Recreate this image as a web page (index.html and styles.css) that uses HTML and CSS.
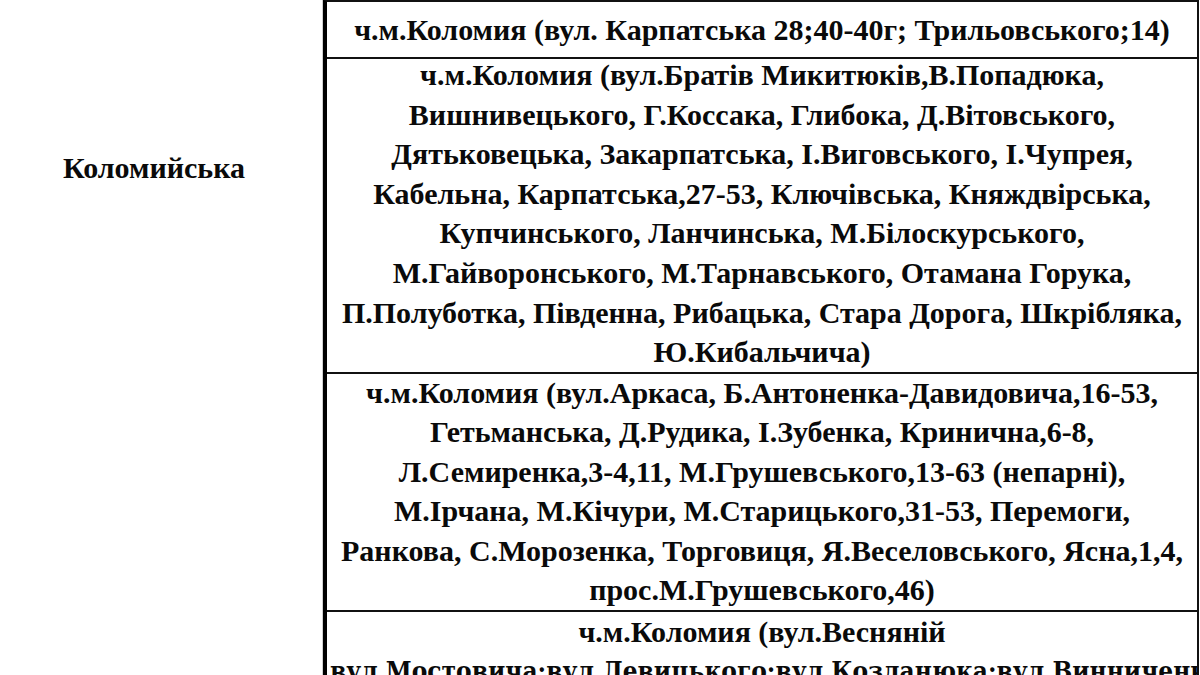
FILE: index.html
```html
<!DOCTYPE html>
<html lang="uk">
<head>
<meta charset="utf-8">
<link rel="stylesheet" href="styles.css">
</head>
<body>
<div class="table">
  <div class="name-col">
    <div class="name">Коломийська</div>
  </div>
  <div class="addr-col">
    <div class="row row1">
      <span class="ln">ч.м.Коломия (вул. Карпатська 28;40-40г; Трильовського;14)</span>
    </div>
    <div class="row row2">
      <div class="lines">
        <span class="ln">ч.м.Коломия (вул.Братів Микитюків,В.Попадюка,</span>
        <span class="ln">Вишнивецького, Г.Коссака, Глибока, Д.Вітовського,</span>
        <span class="ln">Дятьковецька, Закарпатська, І.Виговського, І.Чупрея,</span>
        <span class="ln">Кабельна, Карпатська,27-53, Ключівська, Княждвірська,</span>
        <span class="ln">Купчинського, Ланчинська, М.Білоскурського,</span>
        <span class="ln">М.Гайворонського, М.Тарнавського, Отамана Горука,</span>
        <span class="ln">П.Полуботка, Південна, Рибацька, Стара Дорога, Шкрібляка,</span>
        <span class="ln">Ю.Кибальчича)</span>
      </div>
    </div>
    <div class="row row3">
      <div class="lines">
        <span class="ln">ч.м.Коломия (вул.Аркаса, Б.Антоненка-Давидовича,16-53,</span>
        <span class="ln">Гетьманська, Д.Рудика, І.Зубенка, Кринична,6-8,</span>
        <span class="ln">Л.Семиренка,3-4,11, М.Грушевського,13-63 (непарні),</span>
        <span class="ln">М.Ірчана, М.Кічури, М.Старицького,31-53, Перемоги,</span>
        <span class="ln">Ранкова, С.Морозенка, Торговиця, Я.Веселовського, Ясна,1,4,</span>
        <span class="ln">прос.М.Грушевського,46)</span>
      </div>
    </div>
    <div class="row row4">
      <span class="ln">ч.м.Коломия (вул.Весняній</span>
      <span class="ln alt">вул.Мостовича;вул.Левицького;вул.Козланюка;вул.Винниченко</span>
    </div>
  </div>
</div>
</body>
</html>
```

FILE: styles.css
```css
html, body {
  margin: 0;
  padding: 0;
  background: #fff;
}
body {
  width: 1200px;
  height: 675px;
  overflow: hidden;
  font-family: "Liberation Serif", "Times New Roman", serif;
  font-weight: bold;
  color: #0a0a0a;
}
.table {
  display: flex;
  width: 1200px;
}
.name-col {
  width: 323px;
  border-right: 1px solid #d0d0d0;
  box-sizing: border-box;
  flex: none;
}
.name {
  font-size: 30px;
  line-height: 34px;
  padding-top: 151px;
  padding-right: 14px;
  text-align: center;
}
.addr-col {
  flex: 1;
  border-left: 4px solid #000;
  border-right: 2px solid #111;
  border-top: 2px solid #111;
  margin-right: 1px;
  min-width: 0;
}
.row {
  display: flex;
  flex-direction: column;
  align-items: center;
  border-bottom: 2px solid #111;
  font-size: 30px;
  line-height: 39.4px;
  box-sizing: border-box;
}
.lines {
  display: flex;
  flex-direction: column;
  align-items: center;
}
.ln {
  display: block;
  white-space: nowrap;
}
.row1 {
  height: 57px;
  justify-content: center;
}
.row2 {
  height: 315px;
}
.row2 .lines {
  line-height: 39.6px;
  margin-top: -4px;
}
.row3 {
  height: 238px;
}
.row3 .lines {
  margin-top: -1px;
}
.row4 {
  border-bottom: none;
  overflow: hidden;
  height: 80px;
  align-items: stretch;
  text-align: center;
}
.row4 .ln {
  line-height: 40px;
}
.row4 .alt {
  font-family: "DejaVu Serif Condensed", "DejaVu Serif", serif;
  font-size: 26px;
  line-height: 38px;
  text-align: left;
  padding-left: 3px;
}
```
